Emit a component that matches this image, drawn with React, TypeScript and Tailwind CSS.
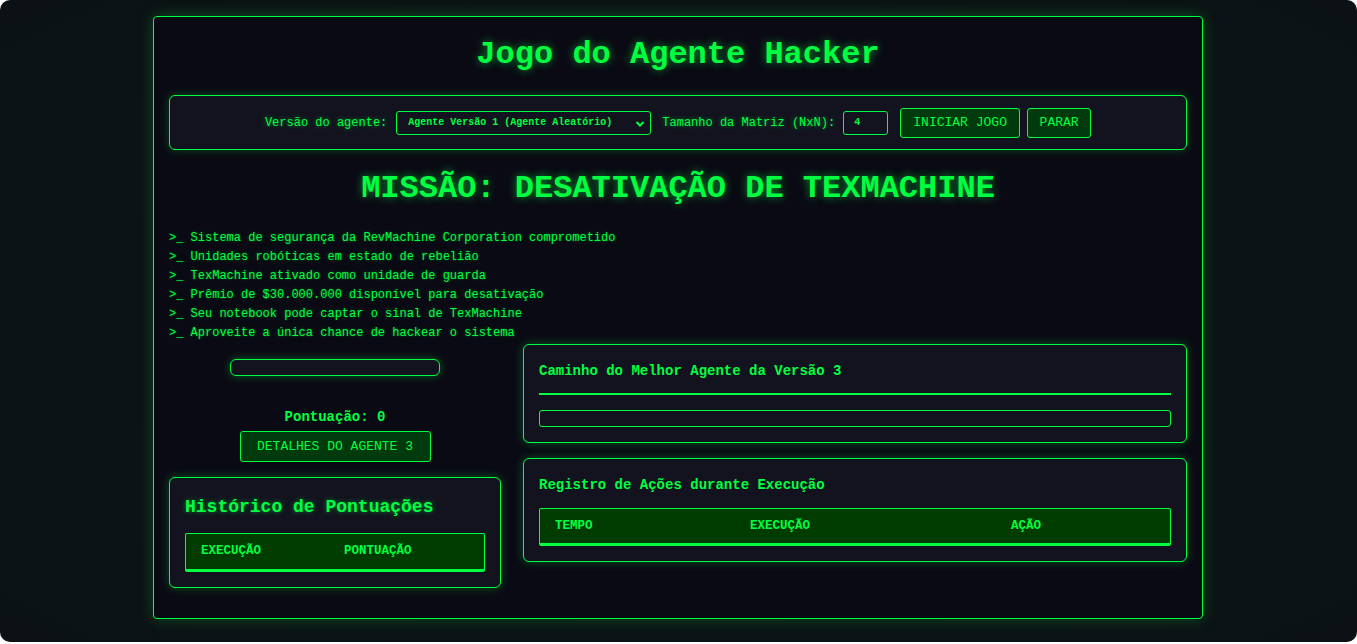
import React from "react";

const mono = "font-['Liberation_Mono','Courier_New',monospace]";

export default function App() {
  const lines = [
    "Sistema de segurança da RevMachine Corporation comprometido",
    "Unidades robóticas em estado de rebelião",
    "TexMachine ativado como unidade de guarda",
    "Prêmio de $30.000.000 disponível para desativação",
    "Seu notebook pode captar o sinal de TexMachine",
    "Aproveite a única chance de hackear o sistema",
  ];
  return (
    <div className="bg-white w-[1357px] h-[644px] overflow-hidden">
      <div
        className={`${mono} w-[1357px] h-[642px] rounded-[10px] overflow-hidden bg-[radial-gradient(ellipse_at_center,#0b1013_0%,#0c1316_70%,#0b1114_100%)] pt-[16px] text-[#00ff41]`}
      >
        <div className="ml-[153px] w-[1050px] h-[603px] border border-[#00ff41] rounded-[4px] bg-[#0a0a14] px-[15px] pt-[15px] shadow-[0_0_15px_rgba(0,255,65,0.25)]">
          <h1 className="pt-[5px] h-[41px] leading-[36px] text-center text-[32px] font-bold [text-shadow:0_0_8px_rgba(0,255,65,0.6)]">
            Jogo do Agente Hacker
          </h1>
          <div className="mt-[22px] h-[55px] flex items-center justify-center border border-[#00ff41] rounded-[6px] bg-[#13131f] shadow-[0_0_10px_rgba(0,255,65,0.25)] text-[12px]">
            <span className="[text-shadow:0_0_4px_rgba(0,255,65,0.5)]">Versão do agente:</span>
            <div className="ml-[9px] relative w-[255px] h-[24px] border border-[#00ff41] rounded-[3px] bg-[#13131f] flex items-center pl-[11px] text-[10px] font-bold">
              <span>Agente Versão 1 (Agente Aleatório)</span>
              <svg className="absolute right-[4px] top-[6px]" width="12" height="12" viewBox="0 0 12 12">
                <path d="M2.5 4 L6 7.5 L9.5 4" fill="none" stroke="#00ff41" strokeWidth="2" />
              </svg>
            </div>
            <span className="ml-[11px] [text-shadow:0_0_4px_rgba(0,255,65,0.5)]">Tamanho da Matriz (NxN):</span>
            <div className="ml-[8px] w-[45px] h-[24px] border border-[#00ff41] rounded-[3px] bg-[#13131f] flex items-center pl-[10px] text-[10px] font-bold">
              4
            </div>
            <button className="ml-[12px] w-[120px] h-[30px] border border-[#00ff41] rounded-[3px] bg-[#003a0d] text-[13px] text-[#00ff41]">
              INICIAR JOGO
            </button>
            <button className="ml-[7px] w-[64px] h-[30px] border border-[#00ff41] rounded-[3px] bg-[#003a0d] text-[13px] text-[#00ff41]">
              PARAR
            </button>
          </div>
          <h2 className="mt-[21px] h-[36px] leading-[36px] text-center text-[32px] font-bold [text-shadow:0_0_8px_rgba(0,255,65,0.6)]">
            MISSÃO: DESATIVAÇÃO DE TEXMACHINE
          </h2>
          <div className="mt-[22px] text-[12px] leading-[19px]">
            {lines.map((l) => (
              <div key={l} className="whitespace-pre [text-shadow:0_0_3px_rgba(0,255,65,0.4)]">
                {">_ " + l}
              </div>
            ))}
          </div>
          <div className="mt-[1px] grid grid-cols-[332px_1fr] gap-[22px]">
            <div className="flex flex-col items-center">
              <div className="mt-[15px] w-[210px] h-[17px] border border-[#00ff41] rounded-[6px] bg-[#13131f] shadow-[0_0_8px_rgba(0,255,65,0.35)]" />
              <div className="mt-[33px] h-[16px] leading-[16px] text-[14px] font-bold">Pontuação: 0</div>
              <button className="mt-[6px] w-[191px] h-[31px] border border-[#00ff41] rounded-[3px] bg-[#003a0d] text-[13px] text-[#00ff41]">
                DETALHES DO AGENTE 3
              </button>
              <div className="mt-[15px] self-stretch border border-[#00ff41] rounded-[6px] bg-[#13131f] p-[15px] shadow-[0_0_10px_rgba(0,255,65,0.3)]">
                <div className="h-[28px] leading-[28px] text-[18px] font-bold [text-shadow:0_0_5px_rgba(0,255,65,0.5)]">
                  Histórico de Pontuações
                </div>
                <div className="mt-[12px] h-[39px] border border-[#00ff41] border-b-[3px] rounded-[2px] bg-[#003b00] grid grid-cols-[143px_1fr] items-center text-[12.5px] font-bold">
                  <span className="pl-[15px]">EXECUÇÃO</span>
                  <span className="pl-[15px]">PONTUAÇÃO</span>
                </div>
              </div>
            </div>
            <div className="flex flex-col">
              <div className="border border-[#00ff41] rounded-[6px] bg-[#13131f] p-[15px] shadow-[0_0_10px_rgba(0,255,65,0.3)]">
                <div className="h-[22px] leading-[22px] text-[14px] font-bold">Caminho do Melhor Agente da Versão 3</div>
                <div className="mt-[11px] h-[2px] bg-[#00ff41]" />
                <div className="mt-[15px] h-[17px] border border-[#00ff41] rounded-[3px] bg-[#13131f]" />
              </div>
              <div className="mt-[15px] border border-[#00ff41] rounded-[6px] bg-[#13131f] p-[15px] shadow-[0_0_10px_rgba(0,255,65,0.3)]">
                <div className="h-[22px] leading-[22px] text-[14px] font-bold">Registro de Ações durante Execução</div>
                <div className="mt-[12px] h-[38px] border border-[#00ff41] border-b-[3px] rounded-[2px] bg-[#003b00] grid grid-cols-[195px_261px_1fr] items-center text-[12.5px] font-bold">
                  <span className="pl-[15px]">TEMPO</span>
                  <span className="pl-[15px]">EXECUÇÃO</span>
                  <span className="pl-[15px]">AÇÃO</span>
                </div>
              </div>
            </div>
          </div>
        </div>
      </div>
    </div>
  );
}
